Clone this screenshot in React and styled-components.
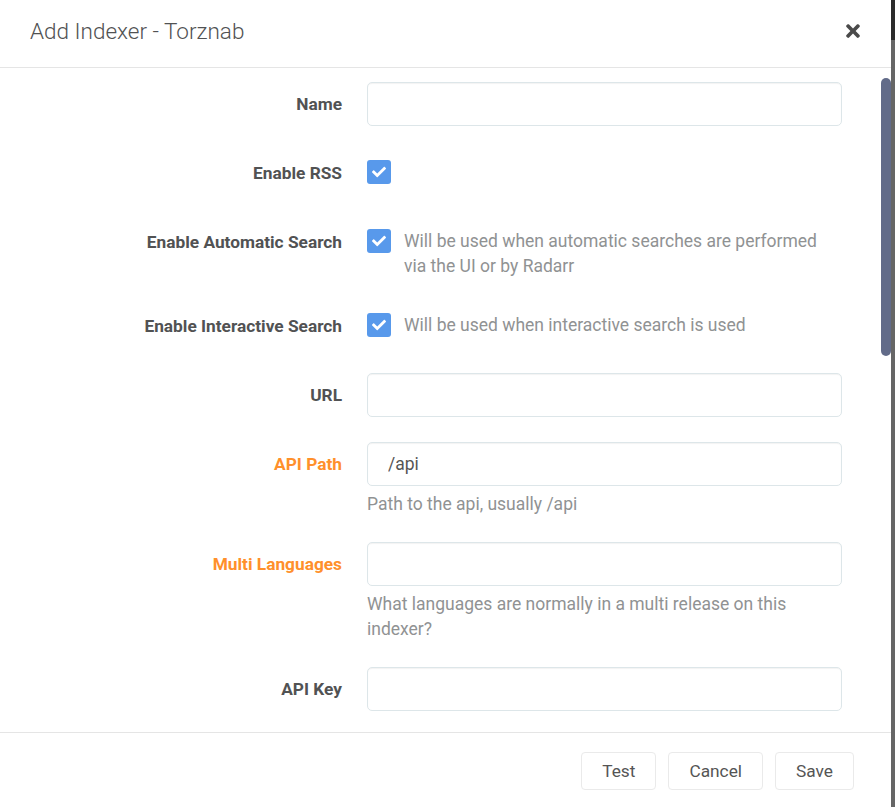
import React from "react";
import styled, { createGlobalStyle } from "styled-components";
import { FaTimes, FaCheck } from "react-icons/fa";

const GlobalStyle = createGlobalStyle`
  html, body {
    margin: 0;
    padding: 0;
    height: 100%;
    overflow: hidden;
    background: #5f5f5f;
    font-family: Roboto, "Open Sans", "Liberation Sans", sans-serif;
  }
  #root {
    height: 100%;
  }
`;

const fields = [
  { id: "name", label: "Name", type: "text" },
  { id: "rss", label: "Enable RSS", type: "check" },
  {
    id: "auto",
    label: "Enable Automatic Search",
    type: "check",
    help: "Will be used when automatic searches are performed via the UI or by Radarr",
  },
  {
    id: "interactive",
    label: "Enable Interactive Search",
    type: "check",
    help: "Will be used when interactive search is used",
  },
  { id: "url", label: "URL", type: "text" },
  {
    id: "apiPath",
    label: "API Path",
    type: "text",
    value: "/api",
    advanced: true,
    help: "Path to the api, usually /api",
  },
  {
    id: "multi",
    label: "Multi Languages",
    type: "text",
    advanced: true,
    help: "What languages are normally in a multi release on this indexer?",
  },
  { id: "apiKey", label: "API Key", type: "text" },
  {
    id: "categories",
    label: "Categories",
    type: "text",
    help: "Comma Separated list, leave blank to disable all categories",
  },
  {
    id: "params",
    label: "Additional Parameters",
    type: "text",
    advanced: true,
    help: "Additional Torznab parameters",
  },
  { id: "removeYear", label: "Remove year from search string", type: "check", advanced: true },
  {
    id: "seeders",
    label: "Minimum Seeders",
    type: "text",
    value: "1",
    advanced: true,
    help: "Minimum number of seeders required.",
  },
  {
    id: "flags",
    label: "Required Flags",
    type: "text",
    advanced: true,
    help: "What indicator flags must be set, leave blank to disable",
  },
  {
    id: "seedRatio",
    label: "Seed Ratio",
    type: "text",
    help: "The ratio a torrent should reach before stopping, empty is download client's default",
  },
  {
    id: "seedTime",
    label: "Seed Time",
    type: "text",
    advanced: true,
    help: "The time a torrent should be seeded before stopping, empty is download client's default",
  },
  { id: "priority", label: "Indexer Priority", type: "text", value: "25", advanced: true },
  { id: "tags", label: "Tags", type: "text" },
];

const App = () => {
  const bodyRef = React.useRef(null);
  const [thumb, setThumb] = React.useState({ top: 10, height: 274 });

  const updateThumb = () => {
    const el = bodyRef.current;
    if (!el) return;
    const ratio = el.clientHeight / el.scrollHeight;
    setThumb({
      top: el.scrollTop * ratio,
      height: el.clientHeight * ratio,
    });
  };

  React.useLayoutEffect(() => {
    if (bodyRef.current) bodyRef.current.scrollTop = 24;
    updateThumb();
  }, []);

  return (
    <Screen>
      <GlobalStyle />
      <Modal>
        <Header>
          <Title>Add Indexer - Torznab</Title>
          <CloseButton aria-label="Close">
            <FaTimes size={20} />
          </CloseButton>
        </Header>

        <BodyWrap>
          <Body ref={bodyRef} onScroll={updateThumb}>
            {fields.map((field) => (
              <FormGroup key={field.id}>
                <Label $advanced={field.advanced}>{field.label}</Label>
                {field.type === "check" ? (
                  <CheckRow>
                    <CheckBox>
                      <FaCheck size={14} />
                    </CheckBox>
                    {field.help && <CheckHelp>{field.help}</CheckHelp>}
                  </CheckRow>
                ) : (
                  <InputColumn>
                    <TextInput defaultValue={field.value || ""} />
                    {field.help && <HelpText>{field.help}</HelpText>}
                  </InputColumn>
                )}
              </FormGroup>
            ))}
          </Body>
          <ScrollTrack>
            <ScrollThumb style={{ marginTop: thumb.top, height: thumb.height }} />
          </ScrollTrack>
        </BodyWrap>

        <Footer>
          <Button>Test</Button>
          <Button>Cancel</Button>
          <Button>Save</Button>
        </Footer>
      </Modal>
      <Backdrop />
    </Screen>
  );
};

const Screen = styled.div`
  display: flex;
  height: 100vh;
`;

const Modal = styled.div`
  flex: 0 0 891px;
  display: flex;
  flex-direction: column;
  background: #fff;
  height: 100%;
`;

const Backdrop = styled.div`
  flex: 1;
  background: linear-gradient(to bottom, #2b2b2b 0, #2b2b2b 40px, #666 40px, #666 100%);
`;

const Header = styled.div`
  flex: 0 0 67px;
  display: flex;
  align-items: center;
  justify-content: space-between;
  padding: 0 28px 0 30px;
  border-bottom: 1px solid #e5e5e5;
`;

const Title = styled.h1`
  margin: 0 0 6px;
  font-size: 22.5px;
  font-weight: 300;
  color: #515253;
`;

const CloseButton = styled.button`
  border: none;
  background: transparent;
  padding: 0;
  margin-bottom: 6px;
  color: #4a4a4a;
  display: flex;
  cursor: pointer;
`;

const BodyWrap = styled.div`
  flex: 1;
  min-height: 0;
  display: flex;
`;

const Body = styled.div`
  flex: 1;
  overflow-y: auto;
  scrollbar-width: none;
  padding: 38px 39px 38px 30px;

  &::-webkit-scrollbar {
    display: none;
  }
`;

const ScrollTrack = styled.div`
  flex: 0 0 10px;
  display: flex;
  flex-direction: column;
  background: #fff;
`;

const ScrollThumb = styled.div`
  width: 10px;
  border-radius: 5px;
  background: #626b89;
`;

const FormGroup = styled.div`
  display: flex;
  align-items: flex-start;
  margin-bottom: 25px;
`;

const Label = styled.label`
  flex: 0 0 312px;
  margin-right: 25px;
  min-height: 44px;
  line-height: 44px;
  text-align: right;
  font-size: 17.3px;
  font-weight: 700;
  color: ${(p) => (p.$advanced ? "#ff902b" : "#515253")};
`;

const InputColumn = styled.div`
  flex: 1;
  display: flex;
  flex-direction: column;
`;

const TextInput = styled.input`
  box-sizing: border-box;
  height: 44px;
  width: 100%;
  padding: 0 20px;
  border: 1px solid #dde6e9;
  border-radius: 5px;
  box-shadow: inset 0 1px 1px rgba(0, 0, 0, 0.05);
  font-family: inherit;
  font-size: 17.5px;
  color: #555;
  outline: none;
`;

const HelpText = styled.div`
  margin-top: 6px;
  font-size: 17.5px;
  line-height: 25px;
  color: #909293;
`;

const CheckRow = styled.div`
  flex: 1;
  display: flex;
  align-items: flex-start;
  padding-top: 9px;
  min-height: 35px;
`;

const CheckBox = styled.span`
  flex: 0 0 24px;
  height: 24px;
  border-radius: 3px;
  background: #5899eb;
  color: #fff;
  display: flex;
  align-items: center;
  justify-content: center;
`;

const CheckHelp = styled.div`
  margin-left: 13px;
  font-size: 17.5px;
  line-height: 25px;
  color: #909293;
`;

const Footer = styled.div`
  flex: 0 0 auto;
  display: flex;
  justify-content: flex-end;
  gap: 12px;
  padding: 19px 37px 17px;
  border-top: 1px solid #e5e5e5;
`;

const Button = styled.button`
  height: 38px;
  padding: 0 20px;
  background: #fff;
  border: 1px solid #eaeaea;
  border-radius: 4px;
  font-family: inherit;
  font-size: 17.3px;
  color: #555;
  cursor: pointer;
`;

export default App;
